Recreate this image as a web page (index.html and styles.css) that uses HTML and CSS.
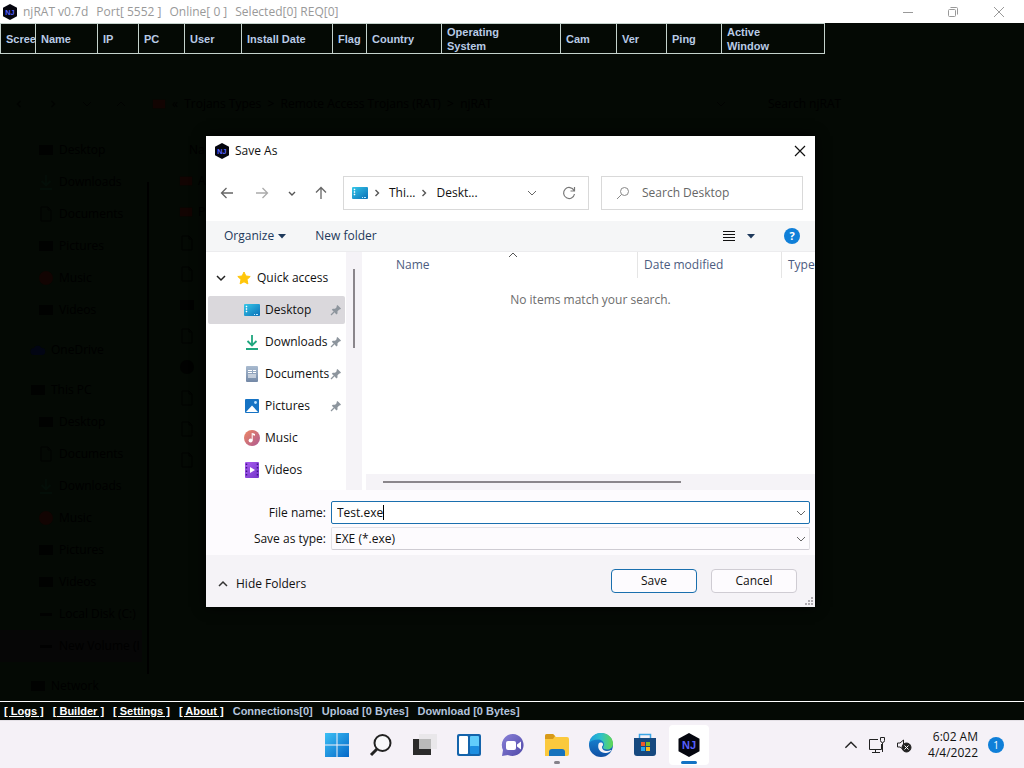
FILE: index.html
```
<!DOCTYPE html>
<html lang="en">
<head>
    <meta charset="UTF-8">
    <title>Save As</title>
    <link rel="stylesheet" href="styles.css">
</head>
<body>
    <!-- shared icons -->
    <svg class="defs" width="0" height="0" aria-hidden="true">
        <defs>
            <linearGradient id="gDesk" x1="0" y1="0" x2="1" y2="1"><stop offset="0" stop-color="#35c7e8"/><stop offset="1" stop-color="#0a6fb8"/></linearGradient>
            <linearGradient id="gWin" x1="0" y1="0" x2="1" y2="1"><stop offset="0" stop-color="#3cc0f5"/><stop offset="1" stop-color="#0567c8"/></linearGradient>
            <linearGradient id="gMusic" x1="0" y1="0" x2="1" y2="1"><stop offset="0" stop-color="#ee8763"/><stop offset="1" stop-color="#ad5a92"/></linearGradient>
            <linearGradient id="gEdge" x1="0" y1="0" x2="1" y2="0"><stop offset="0" stop-color="#1b9de0"/><stop offset="0.5" stop-color="#2fc1c8"/><stop offset="1" stop-color="#62d84e"/></linearGradient>
            <linearGradient id="gEdge2" x1="0" y1="0" x2="0" y2="1"><stop offset="0" stop-color="#1a8fdc"/><stop offset="1" stop-color="#0f4fa3"/></linearGradient>
            <linearGradient id="gChat" x1="0" y1="0" x2="1" y2="1"><stop offset="0" stop-color="#8a82d8"/><stop offset="1" stop-color="#4f48a8"/></linearGradient>
            <linearGradient id="gDoc" x1="0" y1="0" x2="0" y2="1"><stop offset="0" stop-color="#a9bbd0"/><stop offset="1" stop-color="#7388a6"/></linearGradient>
            <linearGradient id="gVid" x1="0" y1="0" x2="1" y2="1"><stop offset="0" stop-color="#a95cf0"/><stop offset="1" stop-color="#7437c9"/></linearGradient>
        </defs>
        <symbol id="i-nj" viewBox="0 0 24 24">
            <path d="M12 0l10.500 5.800v12.400L12 24 1.500 18.200V5.800z" fill="#05060f"/>
            <text x="12" y="16" text-anchor="middle" font-family="Liberation Sans, sans-serif" font-size="11" font-weight="bold" fill="#5560ff">NJ</text>
        </symbol>
        <symbol id="i-desktop" viewBox="0 0 16 16">
            <rect x="0" y="2" width="16" height="12" rx="1" fill="url(#gDesk)"/>
            <path d="M2 4h1v1H2zM2 6.500h1v1H2zM2 9h1v1H2z" fill="#fff" stroke="#fff" stroke-width=".5"/>
            <path d="M10 12.500h1M12 12.500h2" stroke="#bfeaff"/>
        </symbol>
        <symbol id="i-download" viewBox="0 0 16 16">
            <path d="M8 1v10M3.500 7L8 11.500 12.500 7M2 15h12" fill="none" stroke="#1fa67e" stroke-width="1.800"/>
        </symbol>
        <symbol id="i-doc" viewBox="0 0 16 16">
            <rect x="2" y="0" width="12" height="16" rx="1" fill="url(#gDoc)"/>
            <path d="M4 4.500h4M9 4.500h3M4 6.500h4M9 6.500h3M4 9h8M4 11h8" stroke="#fff"/>
        </symbol>
        <symbol id="i-pic" viewBox="0 0 16 16">
            <rect x="1" y="1" width="14" height="14" rx="1" fill="#1673c4"/>
            <path d="M2 14l6-6.500L14 14z" fill="#fff"/>
            <circle cx="11.500" cy="4.500" r="1.400" fill="#bfe3ff"/>
        </symbol>
        <symbol id="i-music" viewBox="0 0 16 16">
            <circle cx="8" cy="8" r="8" fill="url(#gMusic)"/>
            <circle cx="6.600" cy="10.500" r="2" fill="#fff"/>
            <path d="M8.500 10.500V3l2.500 1v1.800L8.500 5" fill="#fff"/>
            <path d="M8.200 10.500V3" stroke="#fff"/>
        </symbol>
        <symbol id="i-video" viewBox="0 0 16 16">
            <rect x="1" y="0" width="14" height="16" rx="1" fill="url(#gVid)"/>
            <path d="M2.500 1.500v14M13.500 1.500v14" stroke="#40158a" stroke-width="1.500" stroke-dasharray="1.500 2"/>
            <path d="M6 5l5 3-5 3z" fill="#fff"/>
        </symbol>
        <symbol id="i-star" viewBox="0 0 16 16">
            <path d="M8 2l1.900 4 4.300.5-3.200 3 .9 4.400L8 11.800l-3.900 2.100.9-4.400-3.200-3L6.100 6z" fill="#ffc60a" stroke="#ffc60a" stroke-linejoin="round"/>
        </symbol>
        <symbol id="i-pin" viewBox="0 0 12 12">
            <path d="M7.500 1L11 4.500l-1 1-.7-.1-1.800 1.900v2.200l-1 1L1.800 5.700l1-1h2.300l1.700-1.800L6.500 2z" fill="#8d959d"/>
            <path d="M4 8L1 11" stroke="#8d959d" stroke-width="1.200"/>
        </symbol>
        <symbol id="i-down" viewBox="0 0 10 10"><path d="M1 3l4 4 4-4" fill="none" stroke="currentColor"/></symbol>
        <symbol id="i-up" viewBox="0 0 10 10"><path d="M1 7l4-4 4 4" fill="none" stroke="currentColor"/></symbol>
        <symbol id="i-right" viewBox="0 0 10 10"><path d="M3.500 2l3 3-3 3" fill="none" stroke="currentColor" stroke-width="1.400"/></symbol>
        <symbol id="i-left" viewBox="0 0 10 10"><path d="M6.500 2l-3 3 3 3" fill="none" stroke="currentColor" stroke-width="1.400"/></symbol>
        <symbol id="i-caret" viewBox="0 0 8 8"><path d="M0 2h8L4 6.500z" fill="currentColor"/></symbol>
        <symbol id="i-file" viewBox="0 0 16 16"><path d="M3 1h7l3 3v11H3zM10 1v3h3" fill="none" stroke="currentColor"/></symbol>
        <symbol id="i-box" viewBox="0 0 16 16"><path d="M1 3h14v10H1z" fill="currentColor"/></symbol>
        <symbol id="i-disk" viewBox="0 0 16 16"><path d="M2 7h12v3H2z" fill="currentColor"/></symbol>
        <symbol id="i-dot" viewBox="0 0 16 16"><circle cx="8" cy="8" r="7" fill="currentColor"/></symbol>
        <symbol id="i-cloud" viewBox="0 0 16 16"><path d="M4 13a3.500 3.500 0 0 1 0-7 4 4 0 0 1 7.500 0A3.500 3.500 0 0 1 12 13z" fill="currentColor"/></symbol>
    </svg>

    <header class="titlebar">
        <svg class="app-icon" width="16" height="16"><use href="#i-nj"/></svg>
        <span class="app-title">njRAT v0.7d</span>
        <span>Port[ 5552 ]</span>
        <span>Online[ 0 ]</span>
        <span>Selected[0] REQ[0]</span>
        <div class="win-controls">
            <button aria-label="Minimize"><svg width="12" height="12"><path d="M1 6.500h10" stroke="#999"/></svg></button>
            <button aria-label="Restore"><svg width="12" height="12" fill="none" stroke="#999"><rect x="1.500" y="3.500" width="7" height="7" rx="1"/><path d="M3.500 1.500h6q1 0 1 1v6"/></svg></button>
            <button aria-label="Close"><svg width="12" height="12"><path d="M1 1l10 10M11 1L1 11" stroke="#999"/></svg></button>
        </div>
    </header>

    <main class="workspace">
        <table class="clients">
            <colgroup>
                <col class="w-screen"><col class="w-name"><col class="w-ip"><col class="w-pc"><col class="w-user"><col class="w-date"><col class="w-flag">
                <col class="w-country"><col class="w-os"><col class="w-cam"><col class="w-ver"><col class="w-ping"><col class="w-active">
            </colgroup>
            <thead>
                <tr>
                    <th>Screen</th><th>Name</th><th>IP</th><th>PC</th><th>User</th><th>Install Date</th><th>Flag</th>
                    <th>Country</th><th>Operating<br>System</th><th>Cam</th><th>Ver</th><th>Ping</th><th>Active<br>Window</th>
                </tr>
            </thead>
        </table>

        <!-- explorer window showing through -->
        <div class="ghost">
            <div class="ghost-nav">
                <svg width="10" height="10"><use href="#i-left"/></svg>
                <svg width="10" height="10"><use href="#i-right"/></svg>
                <svg width="10" height="10"><use href="#i-down"/></svg>
                <svg width="10" height="10"><use href="#i-up"/></svg>
                <svg class="red" width="14" height="14"><use href="#i-box"/></svg>
                <span class="crumbs">«&nbsp; Trojans Types &nbsp;&gt;&nbsp; Remote Access Trojans (RAT) &nbsp;&gt;&nbsp; njRAT</span>
                <svg width="10" height="10"><use href="#i-down"/></svg>
                <span class="ghost-search">Search njRAT</span>
            </div>
            <div class="ghost-body">
                <ul class="ghost-tree">
                    <li><svg width="16" height="16"><use href="#i-box"/></svg>Desktop</li>
                    <li><svg width="16" height="16"><use href="#i-download"/></svg>Downloads</li>
                    <li><svg width="16" height="16"><use href="#i-file"/></svg>Documents</li>
                    <li><svg width="16" height="16"><use href="#i-box"/></svg>Pictures</li>
                    <li><svg class="red" width="16" height="16"><use href="#i-dot"/></svg>Music</li>
                    <li><svg width="16" height="16"><use href="#i-box"/></svg>Videos</li>
                    <li class="root spaced"><svg class="blue" width="16" height="16"><use href="#i-cloud"/></svg>OneDrive</li>
                    <li class="root"><svg width="16" height="16"><use href="#i-box"/></svg>This PC</li>
                    <li><svg width="16" height="16"><use href="#i-box"/></svg>Desktop</li>
                    <li><svg width="16" height="16"><use href="#i-file"/></svg>Documents</li>
                    <li><svg width="16" height="16"><use href="#i-download"/></svg>Downloads</li>
                    <li><svg class="red" width="16" height="16"><use href="#i-dot"/></svg>Music</li>
                    <li><svg width="16" height="16"><use href="#i-box"/></svg>Pictures</li>
                    <li><svg width="16" height="16"><use href="#i-box"/></svg>Videos</li>
                    <li><svg width="16" height="16"><use href="#i-disk"/></svg>Local Disk (C:)</li>
                    <li class="current"><svg width="16" height="16"><use href="#i-disk"/></svg>New Volume (I</li>
                    <li class="root spaced"><svg width="16" height="16"><use href="#i-box"/></svg>Network</li>
                </ul>
                <div class="ghost-scroll"></div>
                <ul class="ghost-files">
                    <li class="head">Na</li>
                    <li><svg class="red" width="14" height="14"><use href="#i-box"/></svg>A</li>
                    <li><svg class="red" width="14" height="14"><use href="#i-box"/></svg>P</li>
                    <li><svg width="16" height="16"><use href="#i-file"/></svg></li>
                    <li><svg width="16" height="16"><use href="#i-file"/></svg></li>
                    <li><svg width="16" height="16"><use href="#i-box"/></svg></li>
                    <li><svg width="16" height="16"><use href="#i-file"/></svg></li>
                    <li><svg width="16" height="16"><use href="#i-dot"/></svg></li>
                    <li><svg width="16" height="16"><use href="#i-file"/></svg></li>
                    <li><svg width="16" height="16"><use href="#i-file"/></svg></li>
                    <li><svg width="16" height="16"><use href="#i-file"/></svg></li>
                </ul>
            </div>
        </div>

        <section class="dialog" role="dialog" aria-labelledby="dlgTitle">
            <div class="dlg-title">
                <svg width="16" height="16"><use href="#i-nj"/></svg>
                <span id="dlgTitle">Save As</span>
                <button class="close" aria-label="Close"><svg width="12" height="12"><path d="M1 1l10 10M11 1L1 11" stroke="#111" stroke-width="1.200"/></svg></button>
            </div>

            <div class="dlg-nav">
                <button aria-label="Back"><svg width="14" height="14" fill="none" stroke="#666" stroke-width="1.300"><path d="M13 7H2M6.500 2L1.500 7l5 5"/></svg></button>
                <button aria-label="Forward"><svg width="14" height="14" fill="none" stroke="#aaa" stroke-width="1.300"><path d="M1 7h11M7.500 2l5 5-5 5"/></svg></button>
                <button aria-label="Recent locations" class="small"><svg width="8" height="8" fill="none" stroke="#555" stroke-width="1.400"><path d="M1 3l3 3 3-3"/></svg></button>
                <button aria-label="Up"><svg width="14" height="14" fill="none" stroke="#666" stroke-width="1.300"><path d="M7 13V2M2 6.500l5-5 5 5"/></svg></button>
                <div class="address">
                    <svg width="16" height="16"><use href="#i-desktop"/></svg>
                    <svg class="sep" width="10" height="10"><use href="#i-right"/></svg>
                    <span>Thi...</span>
                    <svg class="sep" width="10" height="10"><use href="#i-right"/></svg>
                    <span>Deskt...</span>
                    <button class="history" aria-label="Previous locations"><svg width="10" height="10"><use href="#i-down"/></svg></button>
                    <button aria-label="Refresh"><svg width="14" height="14" fill="none" stroke="#777" stroke-width="1.200"><path d="M12 4.500A5.500 5.500 0 1 0 12.500 8M12.500 1v4h-4"/></svg></button>
                </div>
                <div class="search">
                    <svg width="14" height="14" fill="none" stroke="#888"><circle cx="8.500" cy="5.500" r="4"/><path d="M5.500 8.500L1 13"/></svg>
                    <input type="text" aria-label="Search Desktop" placeholder="Search Desktop">
                </div>
            </div>

            <div class="toolbar">
                <button>Organize <svg width="8" height="8"><use href="#i-caret"/></svg></button>
                <button>New folder</button>
                <button class="view" aria-label="Change your view"><svg width="12" height="12"><path d="M0 1.500h12M0 4.500h12M0 7.500h12M0 10.500h12" stroke="#111"/></svg></button>
                <button class="more" aria-label="More options"><svg width="8" height="8"><use href="#i-caret"/></svg></button>
                <button class="help" aria-label="Help">?</button>
            </div>

            <div class="panes">
                <ul class="tree">
                    <li class="group"><svg width="10" height="10" fill="none" stroke="#222" stroke-width="1.500"><path d="M1 3l4 4 4-4"/></svg><svg width="16" height="16"><use href="#i-star"/></svg>Quick access</li>
                    <li class="selected"><svg width="16" height="16"><use href="#i-desktop"/></svg>Desktop<svg class="pin" width="12" height="12"><use href="#i-pin"/></svg></li>
                    <li><svg width="16" height="16"><use href="#i-download"/></svg>Downloads<svg class="pin" width="12" height="12"><use href="#i-pin"/></svg></li>
                    <li><svg width="16" height="16"><use href="#i-doc"/></svg>Documents<svg class="pin" width="12" height="12"><use href="#i-pin"/></svg></li>
                    <li><svg width="16" height="16"><use href="#i-pic"/></svg>Pictures<svg class="pin" width="12" height="12"><use href="#i-pin"/></svg></li>
                    <li><svg width="16" height="16"><use href="#i-music"/></svg>Music</li>
                    <li><svg width="16" height="16"><use href="#i-video"/></svg>Videos</li>
                </ul>
                <div class="vscroll"><div class="thumb"></div></div>
                <div class="files">
                    <div class="columns">
                        <span class="col-name">Name</span>
                        <svg class="sort" width="10" height="10"><use href="#i-up"/></svg>
                        <span class="col-date">Date modified</span>
                        <span class="col-type">Type</span>
                    </div>
                    <p class="empty">No items match your search.</p>
                    <div class="hscroll"><div class="thumb"></div></div>
                </div>
            </div>

            <form class="fields">
                <label for="fileName">File name:</label>
                <div class="combo active">
                    <input type="text" id="fileName" value="Test.exe">
                    <span class="text-caret"></span>
                    <svg width="10" height="10"><use href="#i-down"/></svg>
                </div>
                <label for="fileType">Save as type:</label>
                <div class="combo">
                    <select id="fileType"><option>EXE (*.exe)</option></select>
                    <svg width="10" height="10"><use href="#i-down"/></svg>
                </div>
            </form>

            <div class="dlg-footer">
                <button class="hide-folders"><svg width="10" height="10" fill="none" stroke="#333" stroke-width="1.500"><path d="M1 7l4-4 4 4"/></svg>Hide Folders</button>
                <button class="btn primary">Save</button>
                <button class="btn">Cancel</button>
                <svg class="grip" width="8" height="8" fill="#b0acb2"><path d="M6 0h2v2H6zM6 3h2v2H6zM3 3h2v2H3zM6 6h2v2H6zM3 6h2v2H3zM0 6h2v2H0z"/></svg>
            </div>
        </section>
    </main>

    <footer class="statusbar">
        <a href="#">[ Logs ]</a>
        <a href="#">[ Builder ]</a>
        <a href="#">[ Settings ]</a>
        <a href="#">[ About ]</a>
        <span>Connections[0]</span>
        <span>Upload [0 Bytes]</span>
        <span>Download [0 Bytes]</span>
    </footer>

    <nav class="taskbar">
        <div class="apps">
            <button aria-label="Start"><svg width="24" height="24"><path d="M0 0h11.500v11.500H0zM12.500 0H24v11.500H12.500zM0 12.500h11.500V24H0zM12.500 12.500H24V24H12.500z" fill="url(#gWin)"/></svg></button>
            <button aria-label="Search"><svg width="24" height="24" fill="none" stroke="#222" stroke-width="2"><circle cx="13.500" cy="10" r="8" fill="#f8f8fa"/><path d="M8 16l-6 6" stroke-width="3"/></svg></button>
            <button aria-label="Task view"><svg width="24" height="24"><rect x="6" y="1" width="18" height="15" fill="#e9e7ea"/><rect x="0" y="6" width="18" height="16" fill="#2b2b2b"/><rect x="6" y="6" width="12" height="10" fill="#b9b9b9"/></svg></button>
            <button aria-label="Widgets"><svg width="24" height="24"><rect x="0" y="1" width="24" height="22" rx="2" fill="#1464ab"/><rect x="2" y="3" width="9" height="18" rx="1" fill="#fff"/><rect x="13" y="3" width="9" height="11" rx="1" fill="#62cdfb"/><rect x="13" y="13" width="9" height="8" rx="1" fill="#1d8ee0"/></svg></button>
            <button aria-label="Chat"><svg width="24" height="24"><path d="M12 1a11 11 0 1 1-5 21L1 23l1-6A11 11 0 0 1 12 1z" fill="url(#gChat)"/><rect x="5" y="8" width="10" height="9" rx="2" fill="#fff"/><path d="M16 11.500l4-3v8l-4-3z" fill="#fff"/></svg></button>
            <button aria-label="File Explorer" class="open"><svg width="24" height="24"><path d="M0 3q0-2 2-2h6l3 3h11q2 0 2 2v15q0 2-2 2H0z" fill="#fbc93d"/><path d="M0 3q0-2 2-2h6l2 2-2 3H0z" fill="#d79a1a"/><path d="M4 23v-4q0-3 3-3h10q3 0 3 3v4z" fill="#1673bd"/></svg></button>
            <button aria-label="Edge"><svg width="24" height="24"><circle cx="12" cy="12" r="12" fill="url(#gEdge2)"/><path d="M.3 10C1.500 3 7 0 12 0c7 0 12 5 12 10.500 0 4-3 6-6 6-2.500 0-4-1-4-2 0-1 1-1.500 1-3C15 8.500 12 6.500 9 6.500 5 6.500 1.500 8 .3 10z" fill="url(#gEdge)"/><path d="M9.500 11c-1.500 5 2.500 9.500 7.500 9 2-.2 4-1 5.500-2.500.3-.3 0-.8-.5-.5-4 2-9 .8-9-2.700 0-1.500 1.500-1.800 1-3.300-.7-2-3.700-1.800-4.500 0z" fill="#f4f1f6"/></svg></button>
            <button aria-label="Store"><svg width="24" height="24"><path d="M6.500 7V1.500h11V7" fill="none" stroke="#3ba5e6" stroke-width="1.500"/><path d="M1 5h22v15q0 3-3 3H4q-3 0-3-3z" fill="#17497f"/><path d="M8 9h4v4H8z" fill="#f0582c"/><path d="M13 9h4v4h-4z" fill="#7fba2c"/><path d="M8 14h4v4H8z" fill="#26a6ee"/><path d="M13 14h4v4h-4z" fill="#fdbb1a"/></svg></button>
            <button aria-label="njRAT" class="current"><svg width="24" height="24"><use href="#i-nj"/></svg></button>
        </div>
        <div class="tray">
            <svg width="14" height="14" viewBox="0 0 10 10" color="#222"><use href="#i-up"/></svg>
            <svg class="net" width="18" height="18" fill="none" stroke="#222"><path d="M10 3.500H1.500v10h12V8M4 16.500h8M7.500 13.500v3M14.500 7v9M12.500 1.500h4v3q0 2-2 2t-2-2z"/></svg>
            <svg width="16" height="16" fill="none" stroke="#222"><path d="M6 11.500L4 10H1.500V6H4l3.500-3v4"/><circle cx="10.500" cy="10.500" r="4.500" fill="#222"/><path d="M8.500 8.500l4 4M12.500 8.500l-4 4" stroke="#fff"/></svg>
            <div class="clock"><span>6:02 AM</span><span>4/4/2022</span></div>
            <span class="badge">1</span>
        </div>
    </nav>
</body>
</html>
```
FILE: styles.css
```
* {
    box-sizing: border-box;
}
body {
    margin: 0;
    min-height: 100vh;
    display: flex;
    flex-direction: column;
    overflow: hidden;
    background: #040904;
    font: 12px/16px "Open Sans", sans-serif;
    color: #111;
}
button, input, select {
    font: inherit;
    color: inherit;
    background: none;
    border: 0;
    padding: 0;
    margin: 0;
}
button {
    display: flex;
    align-items: center;
    justify-content: center;
}
ul {
    list-style: none;
    margin: 0;
    padding: 0;
}
svg {
    flex: none;
}
.defs {
    position: absolute;
}

/* main window */
.titlebar {
    display: flex;
    align-items: center;
    height: 23px;
    padding-left: 2px;
    gap: 8px;
    background: #fff;
    color: #999;
}
.titlebar .app-title {
    margin-left: -3px;
}
.win-controls {
    display: flex;
    margin-left: auto;
    margin-right: 2px;
}
.win-controls button {
    width: 46px;
}
.win-controls button:first-child {
    width: 44px;
}
.workspace {
    position: relative;
    flex: 1;
}
.clients {
    width: 824px;
    table-layout: fixed;
    border-collapse: collapse;
    font: bold 11px/14px "Liberation Sans", sans-serif;
    color: #b9cbe6;
}
.clients th {
    height: 30px;
    padding: 0 5px;
    border: 1px solid #c4d2cc;
    text-align: left;
    white-space: nowrap;
    overflow: hidden;
}
.w-screen { width: 35px; }
.w-name { width: 62px; }
.w-ip { width: 41px; }
.w-pc { width: 46px; }
.w-user { width: 57px; }
.w-date { width: 91px; }
.w-flag { width: 34px; }
.w-country { width: 75px; }
.w-os { width: 119px; }
.w-cam { width: 56px; }
.w-ver { width: 50px; }
.w-ping { width: 55px; }
.w-active { width: 103px; }

/* window behind */
.ghost {
    color: #000;
}
.ghost svg {
    opacity: 0.7;
}
.ghost use[href="#i-download"] {
    opacity: 0.05;
}
.ghost .red {
    color: #180302;
}
.ghost .blue {
    color: #02041a;
}
.ghost-nav {
    display: flex;
    align-items: center;
    height: 32px;
    margin-top: 34px;
    padding-left: 14px;
    gap: 24px;
}
.ghost-nav .red {
    margin-left: 2px;
}
.ghost-nav .crumbs {
    width: 520px;
    margin-left: -18px;
}
.ghost-search {
    margin-left: 18px;
}
.ghost-body {
    display: flex;
    align-items: flex-start;
    height: 0;
    padding-top: 14px;
}
.ghost-tree {
    width: 142px;
}
.ghost-tree li {
    display: flex;
    align-items: center;
    height: 32px;
    padding-left: 38px;
    gap: 5px;
    white-space: nowrap;
}
.ghost-tree .root {
    padding-left: 30px;
}
.ghost-tree .spaced {
    height: 48px;
}
.ghost-tree .current {
    background: #060606;
}
.ghost-scroll {
    width: 2px;
    height: 492px;
    margin: 48px 30px 0 5px;
    background: #000;
}
.ghost-files li {
    display: flex;
    align-items: center;
    height: 31px;
    gap: 5px;
}
.ghost-files .head {
    padding-left: 10px;
}

/* save dialog */
.dialog {
    position: absolute;
    left: 206px;
    top: 113px;
    width: 609px;
    background: #fff;
    box-shadow: 0 0 12px #000;
}
.dlg-title {
    display: flex;
    align-items: center;
    height: 29px;
    padding: 0 9px 0 8px;
    gap: 5px;
}
.dlg-title .close {
    margin-left: auto;
}
.dlg-nav {
    display: flex;
    align-items: center;
    height: 56px;
    padding: 0 12px 0 14px;
    gap: 21px;
}
.dlg-nav .small {
    margin-left: -2px;
    margin-right: -3px;
}
.address {
    display: flex;
    align-items: center;
    width: 246px;
    height: 34px;
    margin-left: -6px;
    padding: 0 12px 0 8px;
    gap: 7px;
    border: 1px solid #d9d9d9;
}
.address .sep {
    color: #555;
    margin: 0 -3px;
}
.address .sep + span {
    margin-left: 3px;
}
.address .sep:first-of-type {
    margin-left: 0;
}
.address .history {
    margin-left: auto;
    margin-right: 18px;
    color: #666;
}
.search {
    display: flex;
    align-items: center;
    flex: 1;
    height: 34px;
    margin-left: -9px;
    padding-left: 14px;
    gap: 12px;
    border: 1px solid #d9d9d9;
}
.search input {
    flex: 1;
    min-width: 0;
    outline: 0;
}
.search input::placeholder {
    color: #666;
}
.toolbar {
    display: flex;
    align-items: center;
    height: 31px;
    padding: 0 15px 0 18px;
    background: #f5f6f7;
    border-bottom: 1px solid #ececee;
    color: #1e395b;
}
.toolbar button {
    gap: 4px;
    margin-right: 29px;
}
.toolbar .view {
    margin-left: auto;
    margin-right: 12px;
}
.toolbar .help {
    width: 16px;
    height: 16px;
    margin-right: 0;
    border-radius: 50%;
    background: #0f7fd8;
    color: #fff;
    font-size: 11px;
    font-weight: bold;
}
.panes {
    display: flex;
    height: 238px;
}
.tree {
    width: 140px;
    padding: 12px 1px 0 2px;
}
.tree li {
    display: flex;
    align-items: center;
    height: 28px;
    margin-bottom: 4px;
    padding: 0 3px 0 36px;
}
.tree svg:not(.pin) {
    margin-right: 5px;
}
.tree .group {
    padding-left: 8px;
}
.tree .group svg + svg {
    margin-left: 5px;
}
.tree .selected {
    background: #dad8dc;
    border-radius: 2px;
}
.tree .pin {
    margin-left: auto;
}
.vscroll {
    width: 16px;
    padding: 17px 0 0 7px;
    background: #f5f3f7;
}
.vscroll .thumb {
    width: 2px;
    height: 79px;
    background: #8a868b;
}
.files {
    display: flex;
    flex-direction: column;
    flex: 1;
    padding-left: 4px;
}
.columns {
    display: flex;
    height: 26px;
    line-height: 26px;
    color: #4c5c80;
}
.col-name {
    width: 113px;
    padding-left: 30px;
}
.sort {
    margin-top: -2px;
    margin-left: 29px;
    color: #555;
}
.col-date {
    width: 144px;
    margin-left: auto;
    padding-left: 6px;
    border-left: 1px solid #e5e5e5;
}
.col-type {
    width: 34px;
    padding-left: 6px;
    border-left: 1px solid #e5e5e5;
}
.empty {
    margin: 14px 0 0;
    text-align: center;
    color: #6d6d6d;
}
.hscroll {
    height: 16px;
    margin-top: auto;
    padding: 7px 0 0 17px;
    background: #f5f3f7;
}
.hscroll .thumb {
    width: 298px;
    height: 2px;
    background: #8a868b;
}
.fields {
    display: grid;
    grid-template-columns: 120px 1fr;
    align-items: center;
    gap: 3px 5px;
    padding: 11px 5px 5px 0;
    background: #fdfbfe;
}
.fields label {
    text-align: right;
}
.combo {
    position: relative;
    display: flex;
    align-items: center;
    height: 23px;
    padding-right: 3px;
    border: 1px solid #e3e1e6;
    border-bottom-color: #cfccd3;
    border-radius: 2px;
}
.combo.active {
    border-color: #1a6fae;
    background: #fff;
}
.combo svg {
    color: #666;
}
.combo input,
.combo select {
    flex: 1;
    padding-left: 5px;
    outline: 0;
}
.combo select {
    appearance: none;
    padding-left: 3px;
}
.text-caret {
    position: absolute;
    left: 51px;
    top: 3px;
    width: 1px;
    height: 15px;
    background: #000;
}
.dlg-footer {
    position: relative;
    display: flex;
    align-items: center;
    height: 52px;
    padding: 0 18px 0 12px;
    gap: 14px;
    background: #f5f3f7;
}
.hide-folders {
    gap: 8px;
    margin-top: 6px;
    margin-right: auto;
}
.btn {
    width: 86px;
    height: 24px;
    border: 1px solid #cfccd3;
    border-radius: 4px;
    background: #fdfbfe;
}
.btn.primary {
    border-color: #1a6fae;
}
.grip {
    position: absolute;
    right: 2px;
    bottom: 2px;
}

/* bottom bars */
.statusbar {
    display: flex;
    align-items: center;
    height: 19px;
    padding-left: 4px;
    gap: 9px;
    border-top: 1px solid #fff;
    font: bold 11px/14px "Liberation Sans", sans-serif;
    color: #b4c4dc;
}
.statusbar a {
    color: #fff;
}
.taskbar {
    display: grid;
    grid-template-columns: 1fr auto 1fr;
    align-items: center;
    height: 48px;
    padding-right: 20px;
    background: #f5f1f7;
    border-top: 1px solid #e4e0e6;
}
.apps {
    display: flex;
    grid-column: 2;
    gap: 4px;
    margin-left: 22px;
}
.apps button {
    position: relative;
    width: 40px;
    height: 40px;
}
.apps .current {
    border-radius: 4px;
    background: #fff;
}
.apps .open::after,
.apps .current::after {
    content: "";
    position: absolute;
    bottom: 1px;
    width: 6px;
    height: 3px;
    border-radius: 2px;
    background: #85828a;
}
.apps .current::after {
    width: 16px;
    background: #1272c4;
}
.tray {
    display: flex;
    align-items: center;
    justify-content: flex-end;
    gap: 10px;
}
.clock {
    display: flex;
    flex-direction: column;
    width: 56px;
    text-align: right;
    white-space: nowrap;
}
.badge {
    width: 16px;
    border-radius: 50%;
    background: #0f7fd8;
    color: #fff;
    font-size: 10px;
    text-align: center;
}
```
